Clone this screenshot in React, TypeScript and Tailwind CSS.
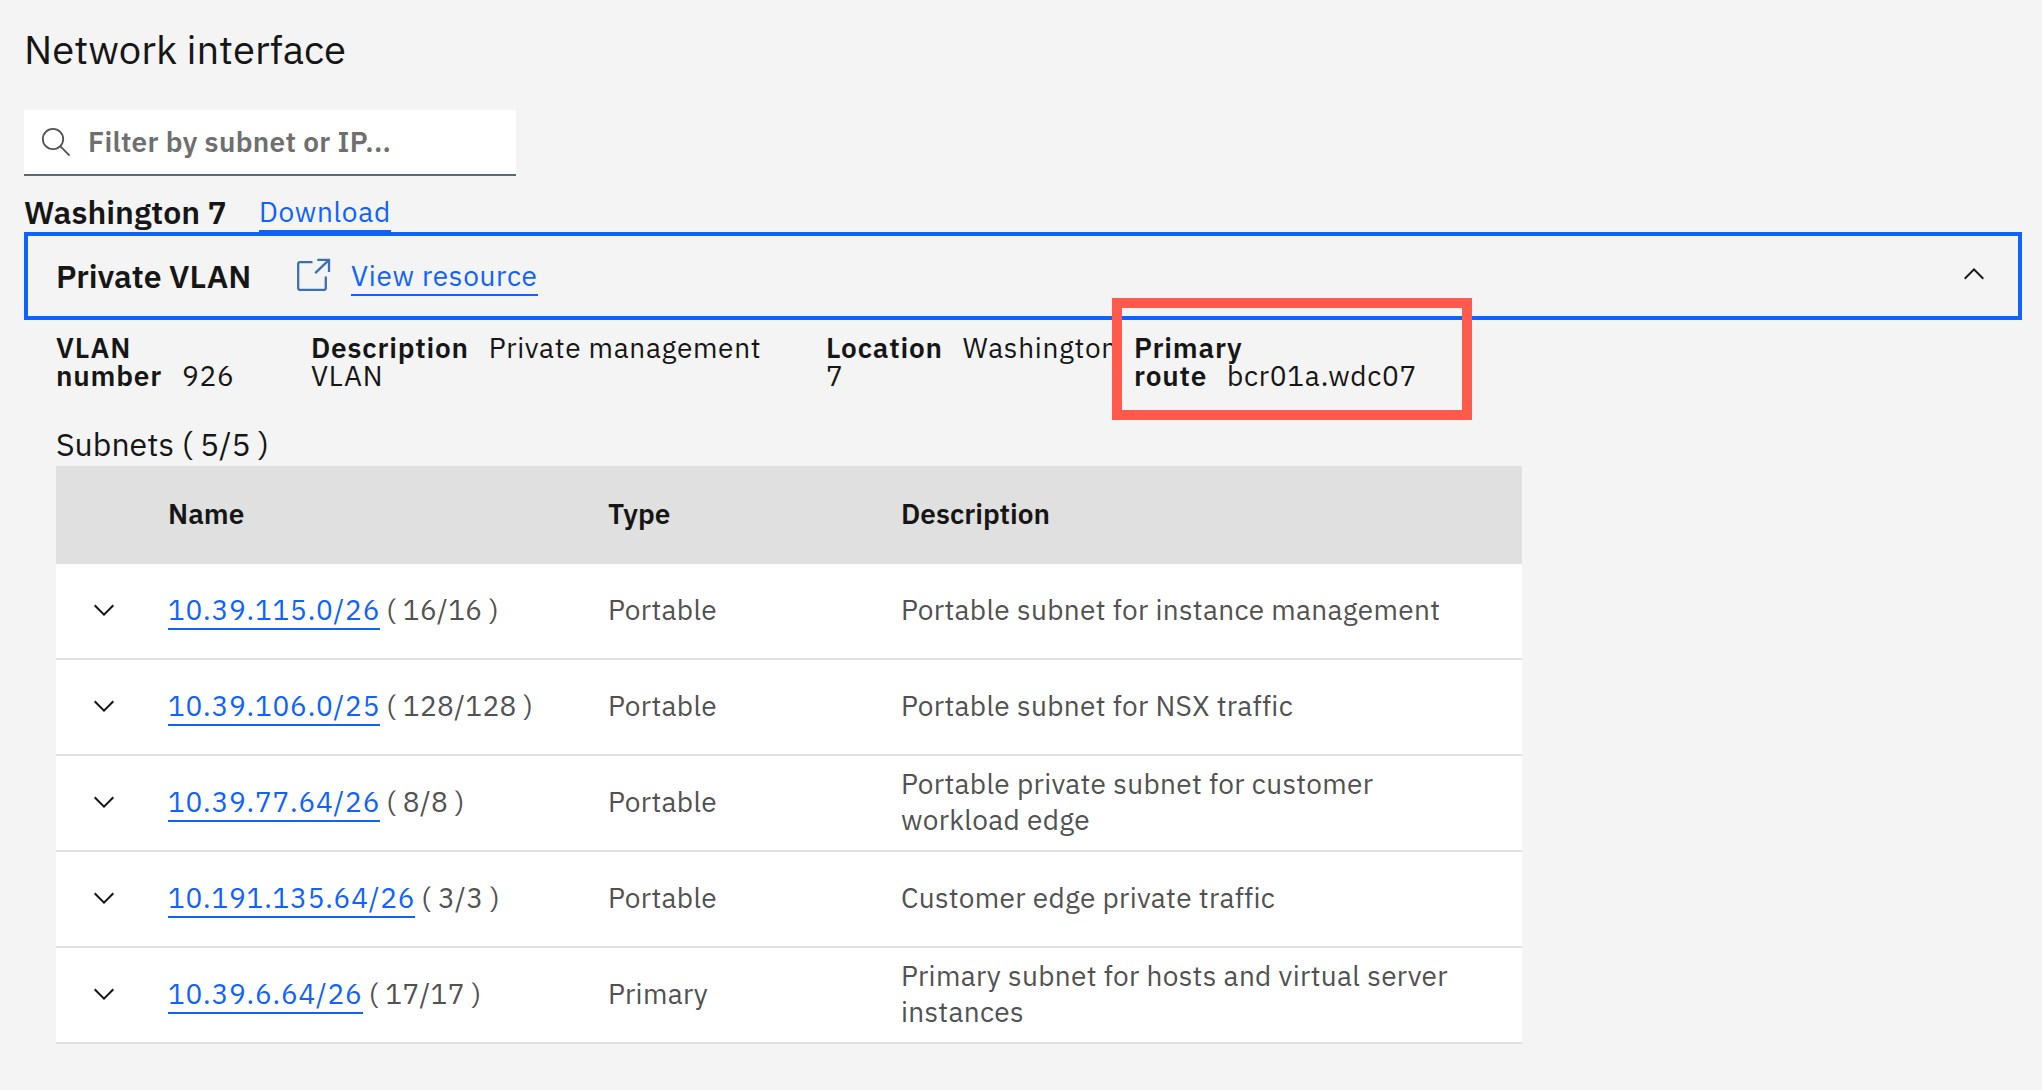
import type { ReactNode } from "react";

type Subnet = { name: string; count: string; type: string; description: string };

const subnets: Subnet[] = [
  { name: "10.39.115.0/26", count: "16/16", type: "Portable", description: "Portable subnet for instance management" },
  { name: "10.39.106.0/25", count: "128/128", type: "Portable", description: "Portable subnet for NSX traffic" },
  { name: "10.39.77.64/26", count: "8/8", type: "Portable", description: "Portable private subnet for customer workload edge" },
  { name: "10.191.135.64/26", count: "3/3", type: "Portable", description: "Customer edge private traffic" },
  { name: "10.39.6.64/26", count: "17/17", type: "Primary", description: "Primary subnet for hosts and virtual server instances" },
];

function Chevron({ up = false }: { up?: boolean }) {
  return (
    <svg className="h-8 w-8 shrink-0" viewBox="0 0 16 16" fill="#161616">
      <path d={up ? "M8 5L13 10 12.3 10.7 8 6.4 3.7 10.7 3 10z" : "M8 11L3 6 3.7 5.3 8 9.6 12.3 5.3 13 6z"} />
    </svg>
  );
}

function Link({ children, className = "" }: { children: ReactNode; className?: string }) {
  return (
    <a href="#" className={`inline-block border-b-2 border-[#0f62fe] text-[#0f62fe] ${className}`}>
      {children}
    </a>
  );
}

function Detail({ label, children, className }: { label: string; children: ReactNode; className: string }) {
  return (
    <div className={`shrink-0 tracking-[0.7px] ${className}`}>
      <span className="mr-5 font-semibold tracking-[0.8px]">{label}</span>
      {children}
    </div>
  );
}

export default function App() {
  return (
    <main className="h-[1090px] w-[2042px] overflow-hidden bg-[#f4f4f4] pl-6 font-['IBM_Plex_Sans',Roboto,sans-serif] text-[28px] tracking-[0.32px] text-[#161616]">
      <h1 className="h-[110px] pt-[21px] text-[40px] leading-[56px] tracking-normal">Network interface</h1>

      <div className="flex h-[66px] w-[492px] items-center border-b-2 border-[#5a6872] bg-white pl-4">
        <svg className="h-8 w-8" viewBox="0 0 32 32" fill="none" stroke="#525252" strokeWidth="1.8">
          <circle cx="13" cy="13" r="10.2" />
          <path d="M20.4 20.4L29.6 29.6" />
        </svg>
        <input
          className="ml-4 w-[400px] font-semibold tracking-[0.32px] outline-none placeholder:text-[#6f6f6f] placeholder:opacity-100"
          placeholder="Filter by subnet or IP..."
        />
      </div>

      <div className="flex h-14 pt-[17px]">
        <h2 className="w-[235px] text-[32px] leading-[38px] font-semibold tracking-normal">Washington 7</h2>
        <Link className="h-[39px] leading-[38px] tracking-[0.7px]">Download</Link>
      </div>

      <section className="flex h-[88px] w-[1998px] items-center border-4 border-[#0f62fe] pr-7 pl-7">
        <h3 className="w-[241px] text-[32px] leading-10 font-semibold tracking-normal">Private VLAN</h3>
        <svg className="mb-0.5 h-[34px] w-[34px]" viewBox="0 0 34 34" fill="none" stroke="#3d70b2" strokeWidth="2.3">
          <path d="M15.500 4.200H2.700a1.500 1.500 0 0 0-1.500 1.500V30.300a1.500 1.500 0 0 0 1.500 1.500H27.300a1.500 1.500 0 0 0 1.500-1.500V18.500" />
          <path d="M20.300 1.900H32V14M32 1.900L18.200 15.100" />
        </svg>
        <Link className="ml-5 h-10 leading-[39px] tracking-[0.7px]">View resource</Link>
        <div className="mb-1 ml-auto">
          <Chevron up />
        </div>
      </section>

      <div className="relative flex h-[102px] pt-[14px] pl-8 leading-[28px]">
        <Detail label="VLAN number" className="w-[255px] pr-16">926</Detail>
        <Detail label="Description" className="w-[515px] pr-10">Private management VLAN</Detail>
        <Detail label="Location" className="w-[308px]">Washington 7</Detail>
        <Detail label="Primary route" className="w-[308px]">bcr01a.wdc07</Detail>
        <div className="absolute top-[-22px] left-[1088px] h-[122px] w-[360px] border-10 border-[#ff5a4c]" />
      </div>

      <h3 className="h-11 pl-8 text-[32px] leading-[44px] tracking-[0.03px]">Subnets ( 5/5 )</h3>

      <div className="ml-8 w-[1466px]">
        <div className="grid h-[98px] grid-cols-[112px_440px_293px_1fr] items-center bg-[#e0e0e0] pb-0.5 font-semibold tracking-normal">
          <span />
          <span>Name</span>
          <span>Type</span>
          <span>Description</span>
        </div>
        {subnets.map((s) => (
          <div key={s.name} className="grid h-24 grid-cols-[112px_440px_293px_1fr] items-center border-b-2 border-[#e0e0e0] bg-white pb-0.5 leading-9 text-[#525252]">
            <div className="pl-8">
              <Chevron />
            </div>
            <div className="flex pt-0.5">
              <Link className="h-[38px] tracking-[0.76px]">{s.name}</Link>
              <span className="ml-[6px]">( {s.count} )</span>
            </div>
            <span>{s.type}</span>
            <span className="pr-12">{s.description}</span>
          </div>
        ))}
      </div>
    </main>
  );
}
